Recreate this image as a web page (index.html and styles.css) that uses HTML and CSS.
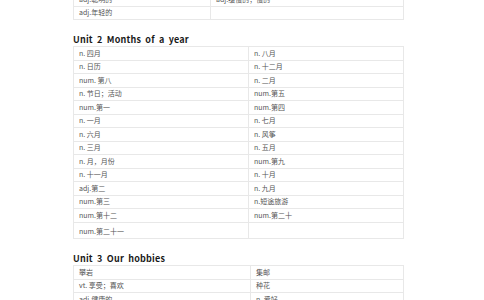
FILE: index.html
```html
<!DOCTYPE html>
<html lang="zh">
<head>
<meta charset="utf-8">
<title>Unit vocabulary</title>
<link rel="stylesheet" href="styles.css">
</head>
<body>
<div class="page">
  <table class="vocab t1">
    <tr><td class="c1">adj.聪明的</td><td>adj.缓慢的；慢的</td></tr>
    <tr><td class="c1">adj.年轻的</td><td></td></tr>
  </table>

  <h2 class="unit">Unit 2 Months of a year</h2>
  <table class="vocab t2">
    <tr><td class="c1">n. 四月</td><td>n. 八月</td></tr>
    <tr><td class="c1">n. 日历</td><td>n. 十二月</td></tr>
    <tr><td class="c1">num. 第八</td><td>n. 二月</td></tr>
    <tr><td class="c1">n. 节日；活动</td><td>num.第五</td></tr>
    <tr><td class="c1">num.第一</td><td>num.第四</td></tr>
    <tr><td class="c1">n. 一月</td><td>n. 七月</td></tr>
    <tr><td class="c1">n. 六月</td><td>n. 风筝</td></tr>
    <tr><td class="c1">n. 三月</td><td>n. 五月</td></tr>
    <tr><td class="c1">n. 月，月份</td><td>num.第九</td></tr>
    <tr><td class="c1">n. 十一月</td><td>n. 十月</td></tr>
    <tr><td class="c1">adj.第二</td><td>n. 九月</td></tr>
    <tr><td class="c1">num.第三</td><td>n.短途旅游</td></tr>
    <tr><td class="c1">num.第十二</td><td>num.第二十</td></tr>
    <tr class="tall"><td class="c1">num.第二十一</td><td></td></tr>
  </table>

  <h2 class="unit">Unit 3 Our hobbies</h2>
  <table class="vocab t3">
    <tr><td class="c1">攀岩</td><td>集邮</td></tr>
    <tr><td class="c1">vt. 享受；喜欢</td><td>种花</td></tr>
    <tr><td class="c1">adj.健康的</td><td>n. 爱好</td></tr>
  </table>
</div>
</body>
</html>
```

FILE: styles.css
```css
html, body {
  margin: 0;
  padding: 0;
  background: #ffffff;
}

.page {
  width: 331px;
  margin-top: -8px;
  padding-left: 73px;
  font-family: "Noto Sans CJK SC", "Noto Sans", sans-serif;
}

.unit {
  margin: 14px 0 0;
  height: 12px;
  line-height: 12px;
  font-family: "Noto Sans CJK SC", "Noto Sans", sans-serif;
  font-size: 9px;
  font-weight: 700;
  letter-spacing: 0.2px;
  word-spacing: 2px;
  color: #1a1a1a;
}

.vocab {
  width: 331px;
  border-collapse: collapse;
  table-layout: fixed;
}

.vocab td {
  height: 13.5px;
  padding: 0 0 0 5px;
  border: 1px solid #e8e8e8;
  font-size: 7px;
  line-height: 9px;
  color: #555555;
  vertical-align: middle;
  box-sizing: border-box;
  white-space: nowrap;
}

.t1 .c1 { width: 137px; }
.t2 .c1 { width: 175px; }
.t3 .c1 { width: 177px; }

.vocab .tall td {
  height: 16.5px;
  padding-top: 2px;
}
```
